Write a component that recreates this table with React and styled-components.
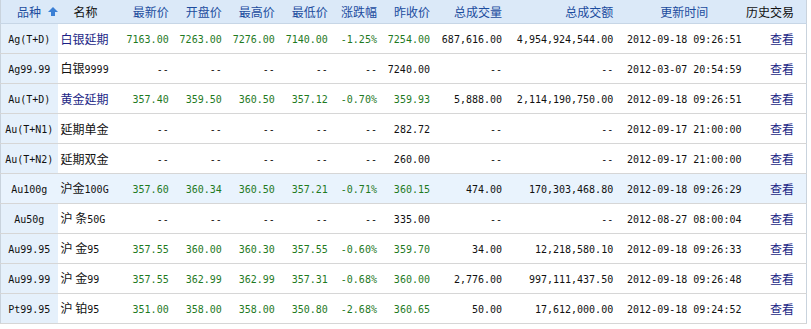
import React from "react";
import styled, { createGlobalStyle } from "styled-components";

const Global = createGlobalStyle`
  html, body { margin: 0; padding: 0; background: #ffffff; }
  body { font-family: "Noto Sans CJK SC", "DejaVu Sans", sans-serif; }
`;

const Table = styled.table`
  border-collapse: collapse;
  table-layout: fixed;
  width: 807px;
  border-left: 1px solid #c9d3dd;
  border-right: 1px solid #c9d3dd;
  border-bottom: 1px solid #c9c9c9;
  font-size: 12px;
  color: #111;
`;

const HeadRow = styled.tr`
  background: #dbe9f8;
`;

const Th = styled.th`
  height: 23px;
  padding: 0 ${(p) => (p.$align === "right" ? (p.$pad ?? 4) : 0)}px 0
    ${(p) => p.$padLeft ?? 0}px;
  font-weight: normal;
  font-size: 12px;
  line-height: 14px;
  text-align: ${(p) => p.$align || "center"};
  color: ${(p) => (p.$dark ? "#111" : "#1c4c9e")};
  border-bottom: 1px solid #c7d6e6;
  white-space: nowrap;
  overflow: visible;
`;

const Row = styled.tr`
  background: ${(p) => (p.$hl ? "#e9f3fd" : "#ffffff")};
`;

const Td = styled.td`
  height: 29px;
  padding: 0 ${(p) => (!p.$align || p.$align === "right" ? (p.$pad ?? 4) : 0)}px 0
    ${(p) => (p.$align === "left" ? 3 : p.$padLeft ?? 0)}px;
  text-align: ${(p) => p.$align || "right"};
  border-bottom: 1px solid #d6d6d6;
  white-space: nowrap;
  line-height: 14px;
  color: ${(p) => p.$color || "#111"};
`;

const CodeCell = styled.td`
  height: 29px;
  padding: 0;
  text-align: center;
  border-bottom: 1px solid #d6d6d6;
  white-space: nowrap;
  line-height: 14px;
  color: #111;
  background: ${(p) => (p.$hl ? "#e9f3fd" : "#e5f0fb")};
`;

const Num = styled.span`
  font-family: "DejaVu Sans Mono", "Liberation Mono", monospace;
  font-size: 10px;
`;

const Cjk = styled.span`
  font-family: "Noto Sans CJK SC", sans-serif;
  font-size: 12px;
`;

const Link = styled.span`
  color: #1b1f86;
`;

const HeadInner = styled.span`
  display: inline-flex;
  align-items: center;
  gap: 7px;
  padding-left: 16px;
`;

const SortIcon = () => (
  <svg width="10" height="9" viewBox="0 0 10 9">
    <polygon points="5,0 10,5 0,5" fill="#3b7fd4" />
    <rect x="3" y="5" width="4" height="4" fill="#3b7fd4" />
  </svg>
);

const Mixed = ({ text }) => {
  const parts = text.split(/([A-Za-z0-9.()+\-%:,]+)/).filter((s) => s !== "");
  return parts.map((s, i) =>
    /[A-Za-z0-9]/.test(s) || /^[.\-()+%:,]+$/.test(s) ? (
      <Num key={i}>{s}</Num>
    ) : (
      <Cjk key={i}>{s}</Cjk>
    )
  );
};

const GREEN = "#1f7a1f";
const D = "--";

const rows = [
  { code: "Ag(T+D)", name: "白银延期", link: true, v: ["7163.00", "7263.00", "7276.00", "7140.00", "-1.25%", "7254.00", "687,616.00", "4,954,924,544.00"], time: "2012-09-18 09:26:51" },
  { code: "Ag99.99", name: "白银9999", v: [D, D, D, D, D, "7240.00", D, D], time: "2012-03-07 20:54:59" },
  { code: "Au(T+D)", name: "黄金延期", link: true, v: ["357.40", "359.50", "360.50", "357.12", "-0.70%", "359.93", "5,888.00", "2,114,190,750.00"], time: "2012-09-18 09:26:51" },
  { code: "Au(T+N1)", name: "延期单金", v: [D, D, D, D, D, "282.72", D, D], time: "2012-09-17 21:00:00" },
  { code: "Au(T+N2)", name: "延期双金", v: [D, D, D, D, D, "260.00", D, D], time: "2012-09-17 21:00:00" },
  { code: "Au100g", name: "沪金100G", hl: true, v: ["357.60", "360.34", "360.50", "357.21", "-0.71%", "360.15", "474.00", "170,303,468.80"], time: "2012-09-18 09:26:29" },
  { code: "Au50g", name: "沪 条50G", v: [D, D, D, D, D, "335.00", D, D], time: "2012-08-27 08:00:04" },
  { code: "Au99.95", name: "沪 金95", v: ["357.55", "360.00", "360.30", "357.55", "-0.60%", "359.70", "34.00", "12,218,580.10"], time: "2012-09-18 09:26:33" },
  { code: "Au99.99", name: "沪 金99", v: ["357.55", "362.99", "362.99", "357.31", "-0.68%", "360.00", "2,776.00", "997,111,437.50"], time: "2012-09-18 09:26:48" },
  { code: "Pt99.95", name: "沪 铂95", v: ["351.00", "358.00", "358.00", "350.80", "-2.68%", "360.65", "50.00", "17,612,000.00"], time: "2012-09-18 09:24:52" },
];

const widths = [57, 56, 59, 53, 53, 53, 49, 53, 72, 111, 126, 63];

const heads = ["最新价", "开盘价", "最高价", "最低价", "涨跌幅", "昨收价", "总成交量", "总成交额"];

export default function App() {
  return (
    <>
      <Global />
      <Table>
        <colgroup>
          {widths.map((w, i) => (
            <col key={i} width={w} />
          ))}
        </colgroup>
        <thead>
          <HeadRow>
            <Th $align="left">
              <HeadInner>
                品种
                <SortIcon />
              </HeadInner>
            </Th>
            <Th $dark>名称</Th>
            {heads.map((h) => (
              <Th key={h} $align="right">
                {h}
              </Th>
            ))}
            <Th $padLeft={8}>更新时间</Th>
            <Th $dark $align="right" $pad={12}>
              历史交易
            </Th>
          </HeadRow>
        </thead>
        <tbody>
          {rows.map((r) => {
            const hasData = r.v[0] !== D;
            return (
              <Row key={r.code} $hl={r.hl}>
                <CodeCell $hl={r.hl}>
                  <Num>{r.code}</Num>
                </CodeCell>
                <Td $align="left">
                  {r.link ? (
                    <Link>
                      <Mixed text={r.name} />
                    </Link>
                  ) : (
                    <Mixed text={r.name} />
                  )}
                </Td>
                {r.v.map((val, i) => (
                  <Td key={i} $color={hasData && i < 6 ? GREEN : "#111"}>
                    <Num>{val}</Num>
                  </Td>
                ))}
                <Td $align="center" $padLeft={8}>
                  <Num>{r.time}</Num>
                </Td>
                <Td $pad={12}>
                  <Link>
                    <Cjk>查看</Cjk>
                  </Link>
                </Td>
              </Row>
            );
          })}
        </tbody>
      </Table>
    </>
  );
}
